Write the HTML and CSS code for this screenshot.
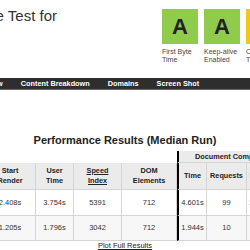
FILE: index.html
```html
<!DOCTYPE html>
<html lang="en">
<head>
  <meta charset="UTF-8" />
  <title>WebPageTest - Test Result</title>
  <link rel="stylesheet" href="styles.css">
</head>
<body>
  <div class="header">
    <div class="title">
      <h1>Web Page Performance Test for</h1>
    </div>
    <div class="grades">
      <div class="grade">
        <div class="grade-box grade-a">A</div>
        <div class="grade-label">First Byte<br>Time</div>
      </div>
      <div class="grade">
        <div class="grade-box grade-a">A</div>
        <div class="grade-label">Keep-alive<br>Enabled</div>
      </div>
      <div class="grade">
        <div class="grade-box grade-c">C</div>
        <div class="grade-label">Compress<br>Transfer</div>
      </div>
    </div>
  </div>

  <nav class="tabs">
    <a href="#">Performance Review</a>
    <a href="#">Content Breakdown</a>
    <a href="#">Domains</a>
    <a href="#">Screen Shot</a>
  </nav>

  <h2 class="results-title">Performance Results (Median Run)</h2>

  <table class="results">
    <colgroup>
      <col class="c-start">
      <col class="c-user">
      <col class="c-speed">
      <col class="c-dom">
      <col class="c-time">
      <col class="c-req">
      <col class="c-bytes">
    </colgroup>
    <thead>
      <tr class="group-row">
        <th colspan="4" class="blank"></th>
        <th colspan="3" class="group split">Document Complete</th>
      </tr>
      <tr class="col-row">
        <th>Start<br>Render</th>
        <th>User<br>Time</th>
        <th><a href="#">Speed<br>Index</a></th>
        <th>DOM<br>Elements</th>
        <th class="split">Time</th>
        <th>Requests</th>
        <th>Bytes In</th>
      </tr>
    </thead>
    <tbody>
      <tr class="first-view">
        <td>2.408s</td>
        <td>3.754s</td>
        <td>5391</td>
        <td>712</td>
        <td class="split">4.601s</td>
        <td>99</td>
        <td>1,069 KB</td>
      </tr>
      <tr class="repeat-view">
        <td>1.205s</td>
        <td>1.796s</td>
        <td>3042</td>
        <td>712</td>
        <td class="split">1.944s</td>
        <td>10</td>
        <td>84 KB</td>
      </tr>
    </tbody>
  </table>

  <div class="plot"><a href="#">Plot Full Results</a></div>
</body>
</html>
```

FILE: styles.css
```css
html, body {
  margin: 0;
  overflow: hidden;
}
body {
  width: 250px;
  height: 250px;
  background: #fff;
  color: #333;
  font-family: "Liberation Sans", Arial, sans-serif;
}

.header {
  display: flex;
  height: 78px;
}
.title {
  width: 57px;
  flex-shrink: 0;
  display: flex;
  justify-content: flex-end;
}
.title h1 {
  margin: 7px 0 0;
  font-size: 15px;
  font-weight: normal;
  line-height: 18px;
  white-space: nowrap;
  color: #333;
}
.grades {
  display: flex;
  gap: 6px;
  margin-left: 105px;
  padding-top: 9px;
}
.grade {
  width: 36px;
  flex-shrink: 0;
}
.grade-box {
  height: 35px;
  display: flex;
  align-items: center;
  justify-content: center;
  font-size: 22px;
  font-weight: bold;
  color: #222;
}
.grade-a {
  background: #90cb4c;
}
.grade-c {
  background: #f5c518;
}
.grade-label {
  margin-top: 4px;
  font-size: 7px;
  line-height: 8px;
  white-space: nowrap;
  color: #444;
}

.tabs {
  display: flex;
  gap: 18px;
  height: 10px;
  padding-top: 1px;
  margin-left: -69px;
  background: #2e2e2e;
  border-bottom: 1px solid #666;
}
.tabs a {
  color: #fff;
  font-size: 7.3px;
  font-weight: bold;
  line-height: 10px;
  text-decoration: none;
  white-space: nowrap;
}

.results-title {
  margin: 44px 0 4px;
  font-size: 11px;
  line-height: 13px;
  text-align: center;
  color: #222;
}

.results {
  margin-left: -15px;
  width: 297px;
  table-layout: fixed;
  border-collapse: separate;
  border-spacing: 0;
}
.c-start { width: 51px; }
.c-user { width: 38px; }
.c-speed { width: 48px; }
.c-dom { width: 55px; }
.c-time { width: 30px; }
.c-req { width: 40px; }
.c-bytes { width: 35px; }

.results th, .results td {
  padding: 0 2px;
  text-align: center;
  white-space: nowrap;
  overflow: hidden;
}
.results th {
  font-size: 7.3px;
  font-weight: bold;
  color: #222;
}
.results th a {
  color: #222;
}
.group-row th {
  line-height: 11px;
}
.group-row .blank {
  background: none;
}
.group-row .group {
  background: #ebebeb;
  border-bottom: 1px solid #d4d4d4;
}
.col-row th {
  padding-top: 3px;
  padding-bottom: 3px;
  line-height: 10px;
  background: #ebebeb;
  border-right: 1px solid #d4d4d4;
  border-bottom: 1px solid #d4d4d4;
}
.results td {
  font-size: 7.5px;
  color: #333;
  border-right: 1px solid #d4d4d4;
  border-bottom: 1px solid #d4d4d4;
}
.first-view td {
  line-height: 25px;
}
.repeat-view td {
  line-height: 24px;
  background: #f7f7f7;
}
.results .split {
  border-left: 2px solid #000;
}

.plot {
  text-align: center;
  font-size: 7.5px;
  line-height: 9px;
}
.plot a {
  color: #222;
}
```
